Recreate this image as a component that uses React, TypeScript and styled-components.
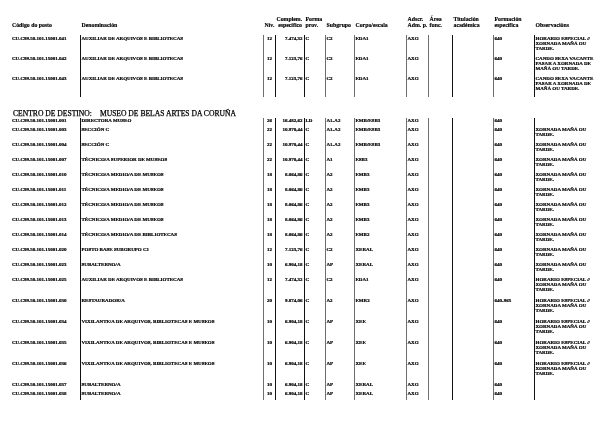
import React from "react";
import styled, { createGlobalStyle } from "styled-components";

type Line = "dark" | "soft" | "none";
type Align = "left" | "right" | "center";

interface IPost {
    code: string;
    name: string;
    level: string;
    complement: string;
    form: string;
    subgroup: string;
    corps: string;
    adscr: string;
    training: string;
    notes: string[];
    h: number;
}

const GlobalStyle = createGlobalStyle`
    html, body {
        margin: 0;
        padding: 0;
        background: #ffffff;
    }
    body {
        font-family: "Liberation Serif", "Times New Roman", serif;
        color: #000000;
        -webkit-font-smoothing: antialiased;
    }
`;

const GRID = "80px 183px 12px 29px 21px 29px 52px 22px 24px 41px 41px 81px";

// line on the left of each column, as in the printed sheet
const colLines: Line[] = ["none", "dark", "soft", "dark", "dark", "soft", "soft", "soft", "soft", "dark", "soft", "dark"];
const colAligns: Align[] = ["left", "left", "center", "right", "left", "left", "left", "left", "left", "left", "left", "left"];

const HORARIO = ["HORARIO ESPECIAL //", "XORNADA MAÑÁ OU", "TARDE."];
const CANDO = ["CANDO SEXA VACANTE", "PASAR A XORNADA DE", "MAÑÁ OU TARDE."];
const XORNADA = ["XORNADA MAÑÁ OU", "TARDE."];

const post = (
    n: string, name: string, level: string, complement: string, form: string,
    subgroup: string, corps: string, training: string, notes: string[], h: number,
): IPost => ({
    code: `CU.C99.50.101.15001.${n}`, name, level, complement, form,
    subgroup, corps, adscr: "AXG", training, notes, h,
});

const firstCentre: IPost[] = [
    post("041", "AUXILIAR DE ARQUIVOS E BIBLIOTECAS", "12", "7.474,32", "C", "C2", "EDA1", "640", HORARIO, 20),
    post("042", "AUXILIAR DE ARQUIVOS E BIBLIOTECAS", "12", "7.123,76", "C", "C2", "EDA1", "640", CANDO, 20),
    post("043", "AUXILIAR DE ARQUIVOS E BIBLIOTECAS", "12", "7.123,76", "C", "C2", "EDA1", "640", CANDO, 22),
];

const museum: IPost[] = [
    post("001", "DIRECTORA MUSEO", "26", "16.482,62", "LD", "A1-A2", "EMB/ESB3", "640", [], 9),
    post("003", "SECCIÓN C", "22", "10.970,44", "C", "A1-A2", "EMB/ESB3", "640", XORNADA, 15),
    post("004", "SECCIÓN C", "22", "10.970,44", "C", "A1-A2", "EMB/ESB3", "640", XORNADA, 15),
    post("007", "TÉCNICO/A SUPERIOR DE MUSEOS", "22", "10.970,44", "C", "A1", "ESB3", "640", XORNADA, 15),
    post("010", "TÉCNICO/A MEDIO/A DE MUSEOS", "18", "8.064,86", "C", "A2", "EMB3", "640", XORNADA, 15),
    post("011", "TÉCNICO/A MEDIO/A DE MUSEOS", "18", "8.064,86", "C", "A2", "EMB3", "640", XORNADA, 15),
    post("012", "TÉCNICO/A MEDIO/A DE MUSEOS", "18", "8.064,86", "C", "A2", "EMB3", "640", XORNADA, 15),
    post("013", "TÉCNICO/A MEDIO/A DE MUSEOS", "18", "8.064,86", "C", "A2", "EMB3", "640", XORNADA, 15),
    post("014", "TÉCNICO/A MEDIO/A DE BIBLIOTECAS", "18", "8.064,86", "C", "A2", "EMB2", "640", XORNADA, 15),
    post("020", "POSTO BASE SUBGRUPO C1", "12", "7.123,76", "C", "C2", "XERAL", "640", XORNADA, 15),
    post("023", "SUBALTERNO/A", "10", "6.904,18", "C", "AP", "XERAL", "640", XORNADA, 15),
    post("025", "AUXILIAR DE ARQUIVOS E BIBLIOTECAS", "12", "7.474,32", "C", "C2", "EDA1", "640", HORARIO, 21),
    post("030", "RESTAURADOR/A", "20", "9.874,06", "C", "A2", "EMR2", "640-965", HORARIO, 21),
    post("034", "VIXILANTE/A DE ARQUIVOS, BIBLIOTECAS E MUSEOS", "10", "6.904,18", "C", "AP", "XEE", "640", HORARIO, 21),
    post("035", "VIXILANTE/A DE ARQUIVOS, BIBLIOTECAS E MUSEOS", "10", "6.904,18", "C", "AP", "XEE", "640", HORARIO, 21),
    post("036", "VIXILANTE/A DE ARQUIVOS, BIBLIOTECAS E MUSEOS", "10", "6.904,18", "C", "AP", "XEE", "640", HORARIO, 21),
    post("037", "SUBALTERNO/A", "10", "6.904,18", "C", "AP", "XERAL", "640", [], 9),
    post("038", "SUBALTERNO/A", "10", "6.904,18", "C", "AP", "XERAL", "640", [], 9.5),
];

const headings: { lines: string[]; align?: Align }[] = [
    { lines: ["Código do posto"] },
    { lines: ["Denominación"] },
    { lines: ["Nív."] },
    { lines: ["Complem.", "específico"], align: "right" },
    { lines: ["Forma", "prov."] },
    { lines: ["Subgrupo"] },
    { lines: ["Corpo/escala"] },
    { lines: ["Adscr.", "Adm. p."] },
    { lines: ["Área", "func."] },
    { lines: ["Titulación", "académica"] },
    { lines: ["Formación", "específica"] },
    { lines: ["Observacións"] },
];

const PostRow: React.FC<{ item: IPost }> = ({ item }) => {
    const values: (string | string[])[] = [
        item.code, item.name, item.level, item.complement, item.form, item.subgroup,
        item.corps, item.adscr, "", "", item.training, item.notes,
    ];

    return (
        <Row $h={item.h}>
            {values.map((v, i) => (
                <Cell key={i} $line={colLines[i]} $align={colAligns[i]} $first={i === 0}>
                    {Array.isArray(v) ? v.map(l => <NoteLine key={l}>{l}</NoteLine>) : v}
                </Cell>
            ))}
        </Row>
    );
};

const App: React.FC = () => {
    return (
        <Page>
            <GlobalStyle />
            <HeaderRow>
                {headings.map((h, i) => (
                    <HeaderCell key={i} $align={h.align || "left"} $first={i === 0}>
                        {h.lines.map(l => <div key={l}>{l}</div>)}
                    </HeaderCell>
                ))}
            </HeaderRow>

            <Table>
                {firstCentre.map(p => <PostRow key={p.code} item={p} />)}
            </Table>

            <CentreTitle>
                <span>CENTRO DE DESTINO:</span>
                <CentreName>MUSEO DE BELAS ARTES DA CORUÑA</CentreName>
            </CentreTitle>

            <Table>
                {museum.map(p => <PostRow key={p.code} item={p} />)}
            </Table>
        </Page>
    );
};

const Page = styled.div`
    width: 615px;
    height: 439px;
    padding-top: 16px;
    box-sizing: border-box;
    overflow: hidden;
    background: #ffffff;
    filter: grayscale(1);
`;

const HeaderRow = styled.div`
    display: grid;
    grid-template-columns: ${GRID};
    align-items: end;
    height: 12px;
    margin-bottom: 7px;
`;

const HeaderCell = styled.div<{ $align: Align; $first: boolean }>`
    font-size: 5.8px;
    font-weight: bold;
    line-height: 6px;
    white-space: nowrap;
    text-align: ${p => p.$align};
    padding-left: ${p => (p.$first ? "12px" : "1.5px")};
    padding-right: ${p => (p.$align === "right" ? "2px" : "0")};
    -webkit-text-stroke: 0.15px #000;
`;

const Table = styled.div`
    display: flex;
    flex-direction: column;
`;

const Row = styled.div<{ $h: number }>`
    display: grid;
    grid-template-columns: ${GRID};
    height: ${p => p.$h}px;
`;

const Cell = styled.div<{ $line: Line; $align: Align; $first: boolean }>`
    box-sizing: border-box;
    border-left: ${p => (p.$line === "none" ? "none" : `1px solid ${p.$line === "dark" ? "#111111" : "#6e6e6e"}`)};
    font-size: 5px;
    font-weight: bold;
    line-height: 5px;
    padding-top: 0.5px;
    padding-left: ${p => (p.$first ? "12px" : p.$align === "center" ? "0" : "0.5px")};
    padding-right: ${p => (p.$align === "right" ? "1.5px" : "0")};
    text-align: ${p => p.$align};
    white-space: nowrap;
    overflow: hidden;
    -webkit-text-stroke: 0.2px #000;
`;

const NoteLine = styled.div`
    white-space: nowrap;
`;

const CentreTitle = styled.div`
    display: flex;
    font-size: 7.6px;
    line-height: 9px;
    padding-left: 13px;
    margin-top: 11.5px;
    margin-bottom: 0.2px;
    -webkit-text-stroke: 0.25px #000;
`;

const CentreName = styled.span`
    margin-left: 8px;
`;

export default App;
